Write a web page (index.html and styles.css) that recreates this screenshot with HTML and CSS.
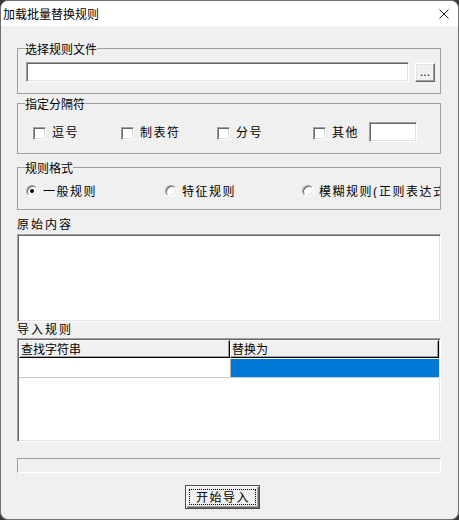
FILE: index.html
```html
<!DOCTYPE html>
<html lang="zh-CN">
<head>
<meta charset="utf-8">
<title>加载批量替换规则</title>
<link rel="stylesheet" href="styles.css">
</head>
<body>
<div class="window">
  <div class="titlebar">
    <span class="title">加载批量替换规则</span>
    <svg class="close" viewBox="0 0 10 10" width="10" height="10"><path d="M0.5 0.5 L9.5 9.5 M9.5 0.5 L0.5 9.5" stroke="#1a1a1a" stroke-width="1" fill="none"/></svg>
  </div>
  <div class="client">
    <fieldset class="group g-file">
      <legend>选择规则文件</legend>
      <div class="file-row">
        <div class="sunken file-edit"></div>
        <div class="raised browse">...</div>
      </div>
    </fieldset>

    <fieldset class="group g-sep">
      <legend>指定分隔符</legend>
      <div class="check-row">
        <div class="check w1"><span class="box"></span><span class="lbl">逗号</span></div>
        <div class="check w2"><span class="box"></span><span class="lbl">制表符</span></div>
        <div class="check w3"><span class="box"></span><span class="lbl">分号</span></div>
        <div class="check"><span class="box"></span><span class="lbl lbl-other">其他</span><span class="sunken other-edit"></span></div>
      </div>
    </fieldset>

    <fieldset class="group g-fmt">
      <legend>规则格式</legend>
      <div class="radio-row">
        <div class="radio r1"><span class="dot on"></span><span class="lbl">一般规则</span></div>
        <div class="radio r2"><span class="dot"></span><span class="lbl">特征规则</span></div>
        <div class="radio r3"><span class="dot"></span><span class="lbl">模糊规则<span class="paren">(</span>正则表达式)</span></div>
      </div>
    </fieldset>

    <div class="caption cap-src">原始内容</div>
    <div class="sunken memo"></div>

    <div class="caption cap-rules">导入规则</div>
    <div class="sunken list">
      <div class="list-head">
        <div class="hcell c1">查找字符串</div>
        <div class="hcell c2">替换为</div>
      </div>
      <div class="list-row">
        <div class="cell c1"></div>
        <div class="cell c2 sel"></div>
      </div>
    </div>

    <div class="progress"></div>

    <div class="raised start"><span class="focus">开始导入</span></div>
  </div>
</div>
</body>
</html>
```

FILE: styles.css
```css
* {
  box-sizing: border-box;
}

html, body {
  margin: 0;
  padding: 0;
}

body {
  width: 459px;
  height: 520px;
  background: #3a3a3a;
  font-family: "Noto Sans CJK SC", "Noto Sans", sans-serif;
  font-size: 12px;
  color: #000;
  overflow: hidden;
}

.window {
  width: 459px;
  height: 520px;
  border: 1px solid #707070;
  border-radius: 8px;
  background: #f0f0f0;
  overflow: hidden;
  display: flex;
  flex-direction: column;
}

.titlebar {
  height: 25px;
  flex: none;
  background: #fff;
  display: flex;
  align-items: center;
  justify-content: space-between;
  padding: 0 9px 0 2px;
}

.title {
  font-size: 12px;
  line-height: 14px;
  color: #000;
}

.close {
  display: block;
  margin-top: 1px;
}

.client {
  flex: 1;
  display: flex;
  flex-direction: column;
  align-items: flex-start;
  padding: 16px 16px 0 16px;
}

.group {
  margin: 0;
  padding: 0;
  border: 1px solid #a0a0a0;
  min-inline-size: 0;
  width: 424px;
}

.group legend {
  margin-left: 7px;
  padding: 0;
  font-size: 12px;
  line-height: 13px;
  height: 13px;
}

.g-sep {
  margin-top: 3px;
}

.g-fmt {
  margin-top: 7px;
}

.sunken {
  background: #fff;
  border-top: 1px solid #a0a0a0;
  border-left: 1px solid #a0a0a0;
  border-right: 1px solid #fff;
  border-bottom: 1px solid #fff;
  box-shadow: inset 1px 1px 0 #696969, inset -1px -1px 0 #e3e3e3;
}

.raised {
  background: #f0f0f0;
  border-top: 1px solid #fff;
  border-left: 1px solid #fff;
  border-right: 1px solid #696969;
  border-bottom: 1px solid #696969;
  box-shadow: inset -1px -1px 0 #a0a0a0, inset 1px 1px 0 #e3e3e3;
}

/* file row */
.file-row {
  display: flex;
  align-items: flex-start;
  padding: 7px 0 11px 8px;
}

.file-edit {
  width: 383px;
  height: 20px;
}

.browse {
  width: 20px;
  height: 19px;
  margin-left: 6px;
  margin-top: 1px;
  font-size: 12px;
  line-height: 16px;
  text-align: center;
  font-family: "Liberation Sans", sans-serif;
}

/* checkboxes */
.check-row {
  display: flex;
  align-items: flex-start;
  padding: 12px 0 11px 15px;
}

.check {
  display: flex;
  align-items: center;
  height: 20px;
}

.check.w1 { width: 88px; }
.check.w2 { width: 96px; }
.check.w3 { width: 96px; }

.box {
  width: 13px;
  height: 13px;
  margin-top: 2px;
  flex: none;
  background: #fff;
  border-top: 1px solid #a0a0a0;
  border-left: 1px solid #a0a0a0;
  border-right: 1px solid #fff;
  border-bottom: 1px solid #fff;
  box-shadow: inset 1px 1px 0 #696969, inset -1px -1px 0 #e3e3e3;
}

.lbl {
  margin-left: 6px;
  line-height: 14px;
  letter-spacing: 1.5px;
  white-space: nowrap;
}

.lbl-other {
  width: 37px;
  flex: none;
}

.other-edit {
  display: block;
  width: 48px;
  height: 20px;
}

/* radios */
.radio-row {
  display: flex;
  align-items: center;
  padding: 10px 0 11px 8px;
  height: 35px;
}

.radio {
  display: flex;
  align-items: center;
  height: 14px;
}

.radio.r1 { width: 139px; }
.radio.r2 { width: 137px; }
.radio.r3 { width: 138px; overflow: hidden; }

.radio .lbl {
  margin-left: 5px;
}

.dot {
  width: 12px;
  height: 12px;
  flex: none;
  border-radius: 50%;
  background: #fff;
  border: 1px solid;
  border-color: #a0a0a0 #fff #fff #a0a0a0;
  box-shadow: inset 1px 1px 0 #696969, inset -1px -1px 0 #e3e3e3;
  display: flex;
  align-items: center;
  justify-content: center;
}

.dot.on::after {
  content: "";
  width: 4px;
  height: 4px;
  border-radius: 50%;
  background: #000;
}

.paren {
  display: inline-block;
  width: 6px;
  font-family: "Liberation Sans", sans-serif;
}

/* captions */
.caption {
  line-height: 14px;
  letter-spacing: 2px;
  white-space: nowrap;
}

.cap-src {
  margin-top: 7px;
}

.memo {
  margin-top: 3px;
  width: 424px;
  height: 88px;
}

.cap-rules {
  margin-top: 0;
}

/* list view */
.list {
  margin-top: 2px;
  width: 424px;
  height: 104px;
  padding: 1px;
  display: flex;
  flex-direction: column;
}

.list-head {
  display: flex;
  height: 18px;
  flex: none;
}

.hcell {
  height: 18px;
  background: #f0f0f0;
  border-top: 1px solid #fff;
  border-left: 1px solid #fff;
  border-right: 1px solid #000;
  border-bottom: 1px solid #000;
  box-shadow: inset -1px -1px 0 #a0a0a0;
  font-size: 12px;
  line-height: 15px;
  padding-left: 1px;
  white-space: nowrap;
}

.hcell.c1 { width: 211px; }
.hcell.c2 { width: 209px; }

.list-row {
  display: flex;
  height: 20px;
  flex: none;
  border-bottom: 1px solid #c8c8c8;
}

.cell {
  height: 19px;
}

.cell.c1 { width: 211px; }
.cell.c2 { width: 209px; }

.cell.sel {
  margin-top: 1px;
  height: 18px;
  background: #0078d7;
  border-left: 1px solid #b4b4b4;
}

/* progress */
.progress {
  margin-top: 16px;
  width: 424px;
  height: 15px;
  background: #f0f0f0;
  border-top: 1px solid #a0a0a0;
  border-left: 1px solid #a0a0a0;
  border-right: 1px solid #fff;
  border-bottom: 1px solid #fff;
}

/* start button */
.start {
  margin-top: 12px;
  margin-left: 168px;
  width: 75px;
  height: 24px;
  border: 1px solid #4a4a4a;
  box-shadow: inset 1px 1px 0 #fff, inset -1px -1px 0 #696969, inset -2px -2px 0 #a0a0a0;
  padding: 3px;
  display: flex;
}

.focus {
  flex: 1;
  border: 1px dotted #000;
  text-align: center;
  font-size: 12px;
  line-height: 14px;
  letter-spacing: 1.5px;
  padding-left: 1px;
}
```
